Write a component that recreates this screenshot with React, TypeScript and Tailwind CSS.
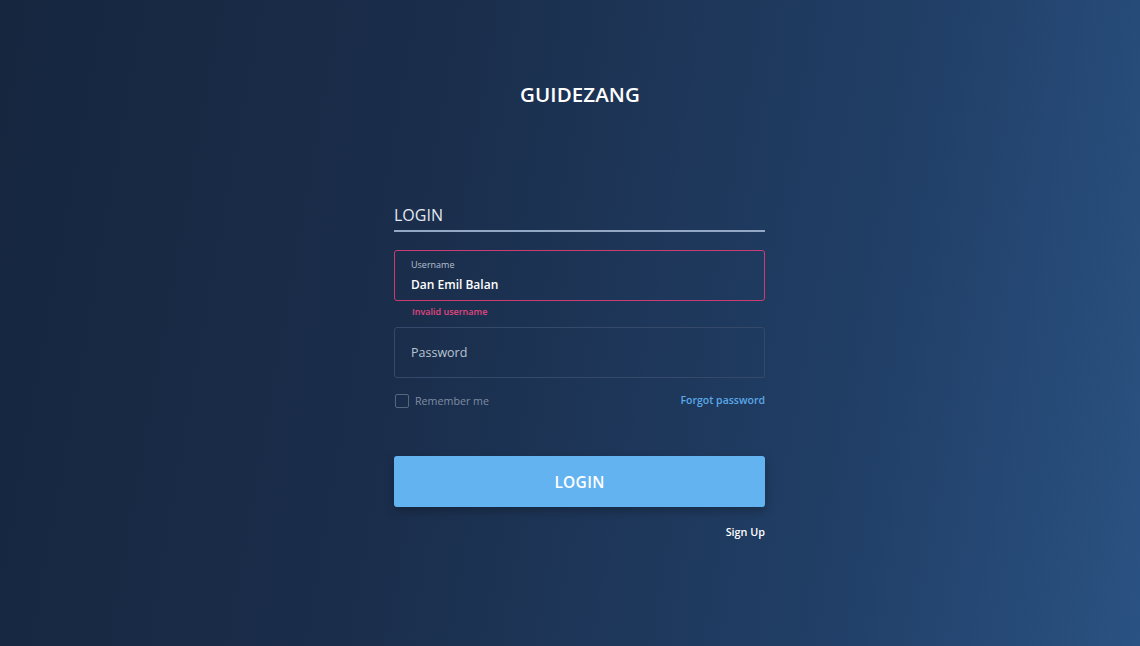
export default function App() {
  return (
    <div
      className="w-[1140px] h-[646px] overflow-hidden bg-[linear-gradient(100deg,#16263f_0%,#1a2d4a_35%,#213f67_75%,#2a5282_100%)] flex flex-col items-center pl-[19px]"
      style={{ fontFamily: '"Open Sans", "Noto Sans", sans-serif' }}
    >
      <h1 className="mt-[79px] text-[20.5px] leading-[30px] font-semibold text-white tracking-[0.1px] ml-[1px]">
        GUIDEZANG
      </h1>

      <div className="mt-[94px] w-[371px] flex flex-col">
        <div className="border-b-2 border-[#93a8c4] pb-[3px]">
          <h2 className="text-[16px] leading-[24px] text-[#e3e9f2] font-normal">LOGIN</h2>
        </div>

        {/* username */}
        <div className="mt-[18px] h-[51px] rounded-[3px] border border-[#cc3c74] px-[16px] pt-[8px]">
          <div className="text-[9px] leading-[12px] text-[#b6c0cf]">Username</div>
          <div className="mt-[5px] text-[12px] leading-[18px] font-semibold text-white">Dan Emil Balan</div>
        </div>
        <div className="mt-[4px] pl-[18px] text-[9px] leading-[13px] text-[#e0467f] font-semibold">
          Invalid username
        </div>

        {/* password */}
        <div className="mt-[9px] h-[51px] rounded-[3px] border border-[#35496a] px-[16px] pt-[1px] flex items-center">
          <span className="text-[12.5px] text-[#b8c3d2]">Password</span>
        </div>

        <div className="mt-[15px] flex items-center justify-between">
          <label className="flex items-center gap-[6px]">
            <span className="w-[14px] h-[14px] rounded-[2px] border border-[#55667f] ml-[1px]" />
            <span className="text-[10.7px] text-[#7e8ca1]">Remember me</span>
          </label>
          <a className="text-[10.5px] font-semibold text-[#5aa8e8]">Forgot password</a>
        </div>

        <button className="mt-[47px] h-[51px] pt-[2px] rounded-[3px] bg-[#63b3f1] text-white text-[15.5px] font-semibold tracking-[0.3px] shadow-[0_4px_10px_rgba(0,0,0,0.25)]">
          LOGIN
        </button>

        <div className="mt-[17px] flex justify-end">
          <a className="text-[10.8px] font-semibold text-white">Sign Up</a>
        </div>
      </div>
    </div>
  );
}
